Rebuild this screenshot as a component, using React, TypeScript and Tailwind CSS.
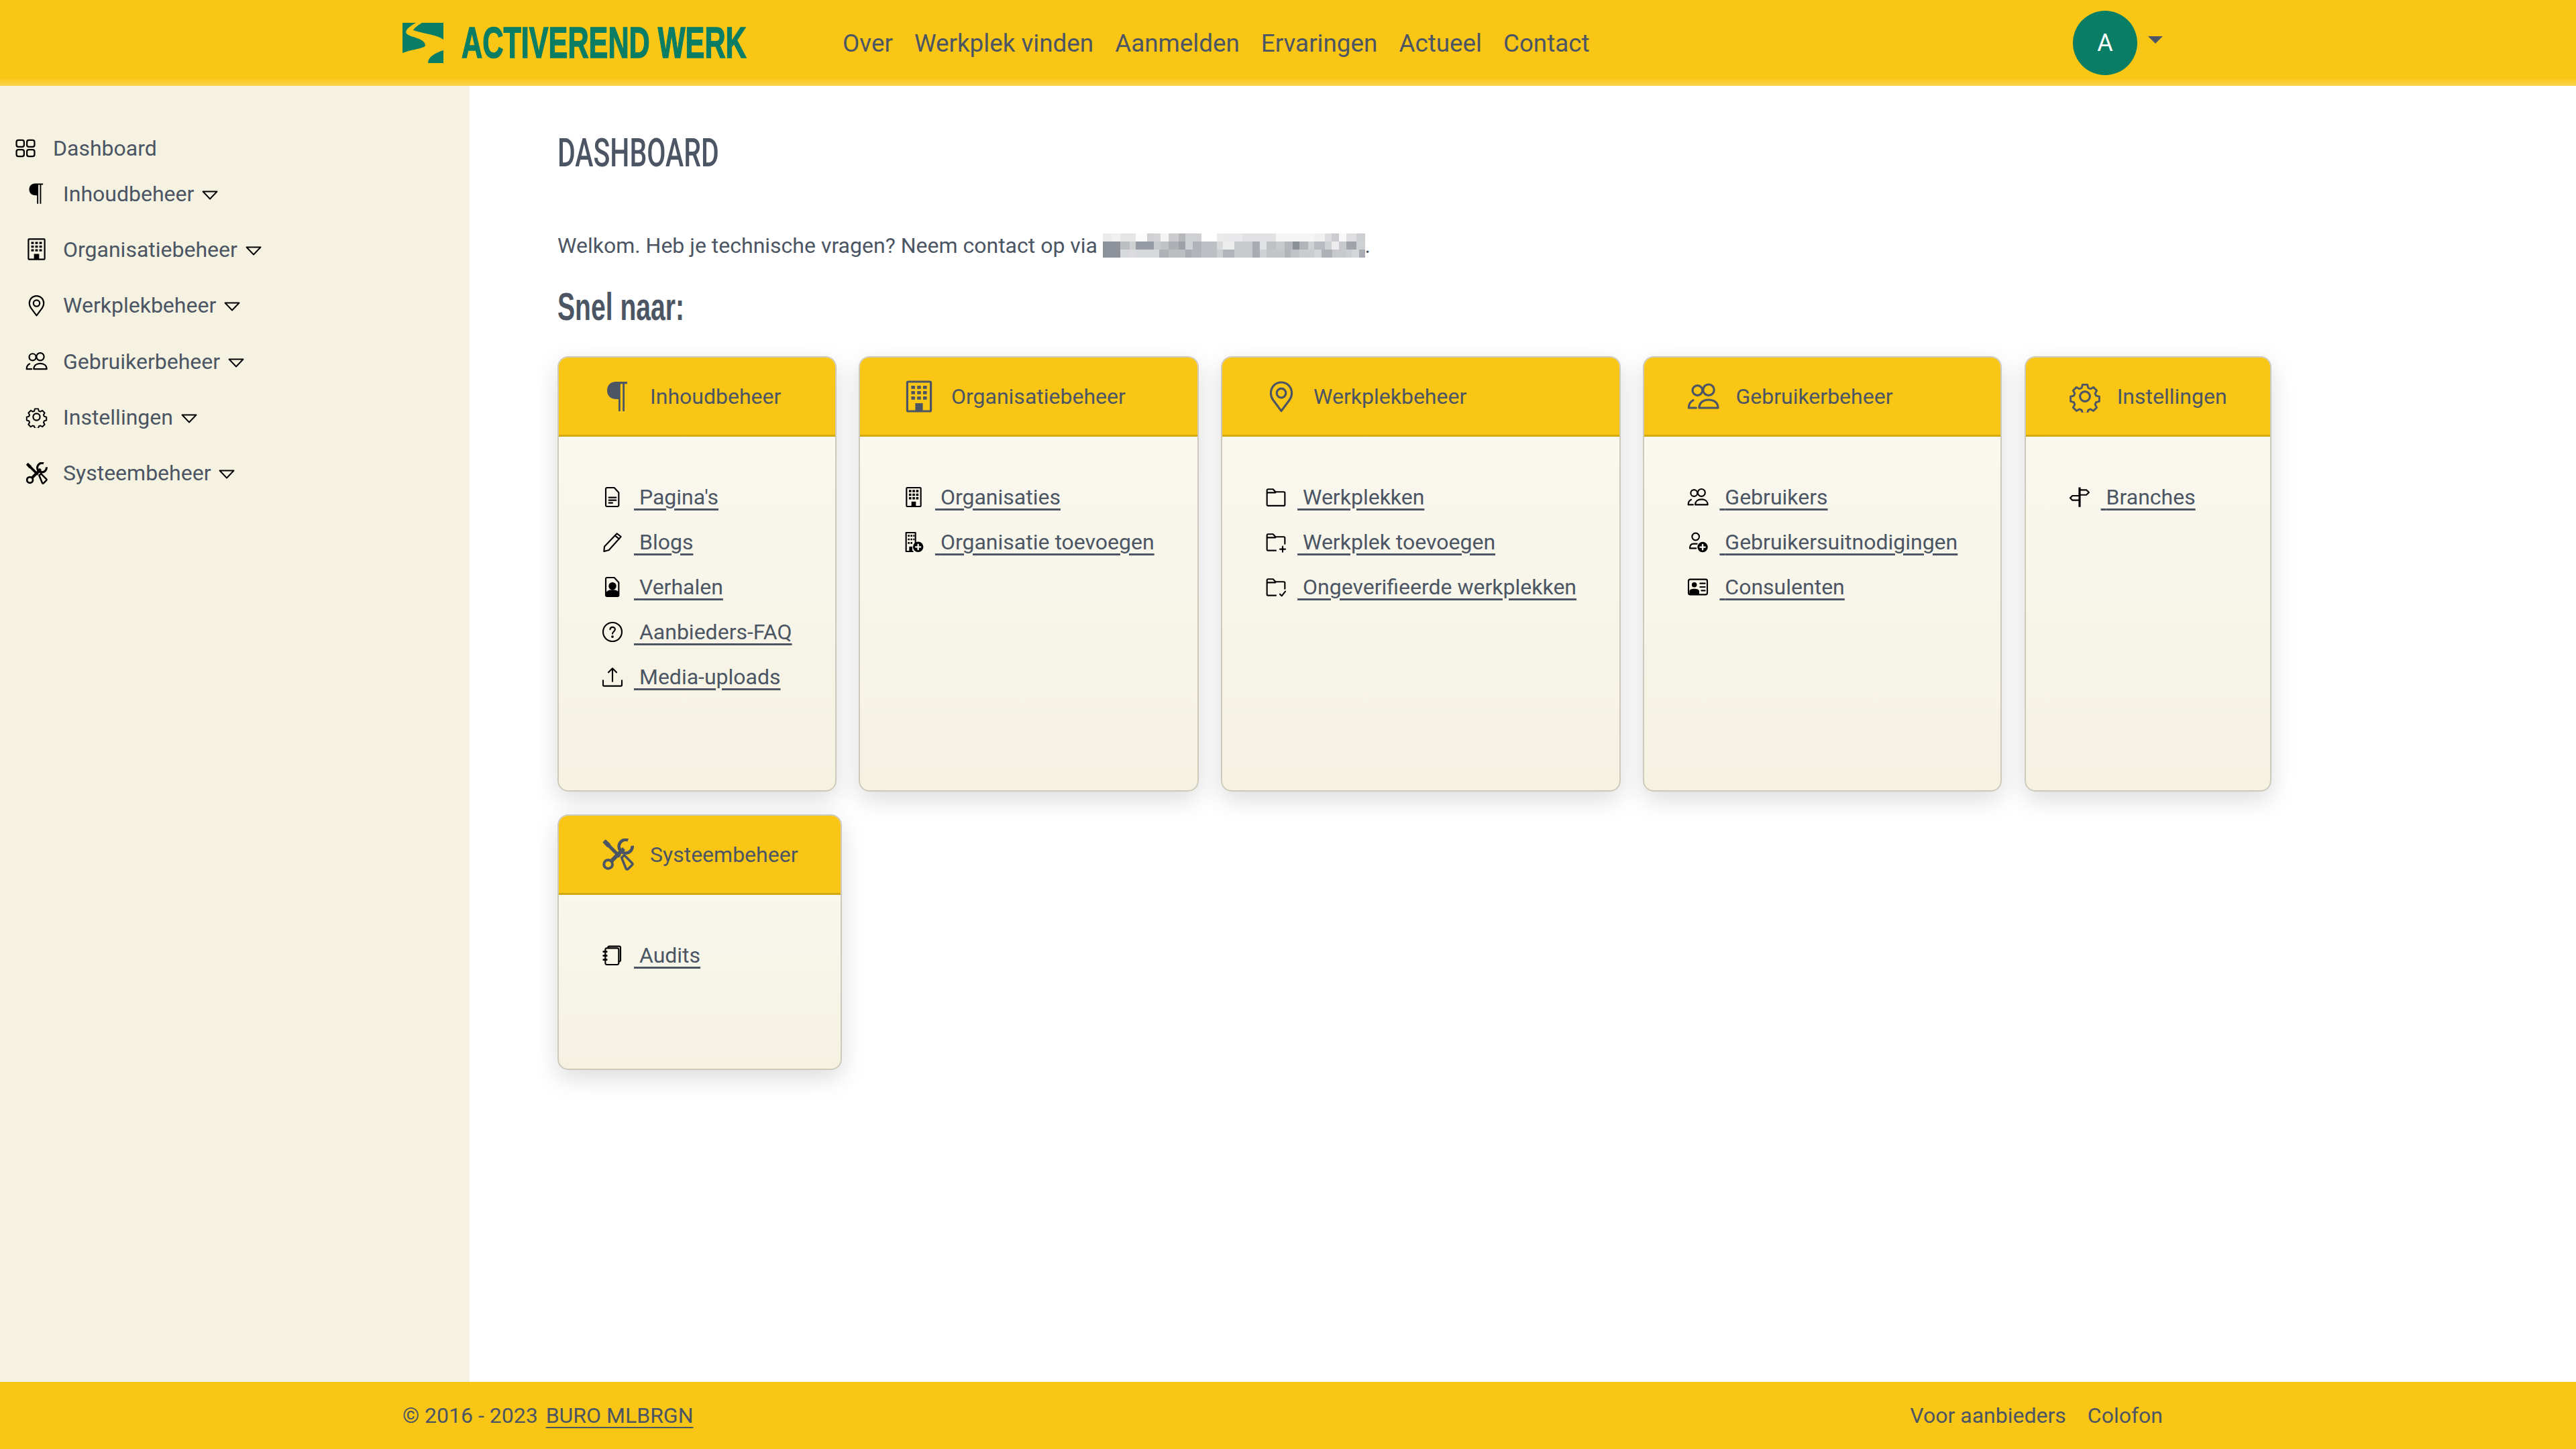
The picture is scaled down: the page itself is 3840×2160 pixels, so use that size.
import React from "react";

const S = (p: { children: React.ReactNode; className?: string; fill?: boolean }) => (
  <svg viewBox="0 0 24 24" fill={p.fill ? "currentColor" : "none"} stroke={p.fill ? "none" : "currentColor"} strokeWidth={1.6} strokeLinecap="round" strokeLinejoin="round" className={p.className}>
    {p.children}
  </svg>
);
type I = { className?: string };
const Grid = (p: I) => <S {...p}><rect x="2.500" y="3.500" width="8" height="7" rx="2" /><rect x="13.500" y="3.500" width="8" height="7" rx="2" /><rect x="2.500" y="13.500" width="8" height="7" rx="2" /><rect x="13.500" y="13.500" width="8" height="7" rx="2" /></S>;
const Para = (p: I) => <S {...p} fill><path d="M19 1v1.600h-2V23h-1.400V2.600h-1.700V23h-1.400V14h-1.500C6.400 14 4 11.300 4 7.500S6.600 1 10.500 1z" /></S>;
const Building = (p: I) => (
  <S {...p}>
    <rect x="3.200" y="1" width="17.600" height="22" rx=".8" />
    <path fill="currentColor" stroke="none" d="M6.200 4h2.800v2.400H6.200zM10.600 4h2.800v2.400h-2.800zM15 4h2.800v2.400H15zM6.200 8h2.800v2.400H6.200zM10.600 8h2.800v2.400h-2.800zM15 8h2.800v2.400H15zM6.200 12h2.800v2.400H6.200zM10.600 12h2.800v2.400h-2.800zM15 12h2.800v2.400H15zM9.200 17h5.600v5.500H9.200z" />
  </S>
);
const Pin = (p: I) => <S {...p}><path d="M12 22.800 5.900 14.600C4.900 13.200 4.200 11.600 4.200 9.500 4.200 5 7.600 1.500 12 1.500s7.800 3.500 7.800 8c0 2.100-.7 3.700-1.700 5.100z" /><circle cx="12" cy="9.500" r="3.400" /></S>;
const Users = (p: I) => (
  <S {...p}>
    <circle cx="7.700" cy="7.500" r="3.700" /><circle cx="16" cy="7.100" r="4.100" />
    <path d="M1.200 20.500h5.500M1.200 20.500c0-2.700 1-4.600 3.300-5.700M9 20.500h14c0-3.600-2.700-6-7-6s-7 2.400-7 6z" />
  </S>
);
const Gear = (p: I) => (
  <S {...p}>
    <path d="M10 2.200h4l.7 2.700 1.900.8 2.400-1.400 2.800 2.800-1.400 2.400.8 1.900 2.700.7v4l-2.700.7-.8 1.900 1.400 2.400-2.800 2.800-2.400-1.400-1.900.8-.7 2.700h-4l-.7-2.700-1.900-.8-2.400 1.400-2.800-2.800 1.400-2.400-.8-1.900-2.700-.7v-4l2.700-.7.8-1.900-1.400-2.400 2.800-2.800 2.400 1.400 1.900-.8z" transform="translate(1.200 1.200) scale(.9)" />
    <circle cx="12" cy="12" r="3.700" />
  </S>
);
const Tools = (p: I) => (
  <S {...p}>
    <path d="M3 3 13.500 13.500" strokeWidth="2.600" strokeLinecap="butt" />
    <path d="M1.300 2.800 2.800 1.300 6 4.300 4.300 6z" fill="currentColor" strokeWidth="1" />
    <path d="M14.800 14.300 16.800 12.400 22.600 18.200c.5.5.5 1 0 1.500L19.700 22.600c-.5.500-1 .5-1.500 0z" strokeWidth="1.800" />
    <circle cx="4.800" cy="19.200" r="3.200" strokeWidth="2" />
    <path d="M7.200 16.800 16.500 7.500" strokeWidth="3" strokeLinecap="butt" />
    <path d="M19.600 1.200A5 5 0 1 0 22.800 5.400" strokeWidth="2.300" strokeLinecap="butt" />
  </S>
);
const FileDoc = (p: I) => <S {...p}><path d="M6 1.500h8l5 5.500v14a1.500 1.500 0 0 1-1.500 1.500h-11.500A1.500 1.500 0 0 1 4.500 21V3A1.500 1.500 0 0 1 6 1.500z" /><path d="M8 12.500h8M8 15.500h8M8 18.500h4" /></S>;
const Pencil = (p: I) => <S {...p}><path d="M17 2.500 21.500 6 8 21l-5.500 1.500L3 17z" /><path d="m15 5 4.500 3.500" /></S>;
const Story = (p: I) => <S {...p}><path d="M6 1.500h8l5 5.500v14a1.500 1.500 0 0 1-1.500 1.500h-11.500A1.500 1.500 0 0 1 4.500 21V3A1.500 1.500 0 0 1 6 1.500z" /><circle cx="12" cy="11" r="3.500" fill="currentColor" /><path d="M5.500 22v-2.500c0-2 2-3.500 6.500-3.500s6.500 1.500 6.500 3.500V22z" fill="currentColor" /></S>;
const Help = (p: I) => <S {...p}><circle cx="12" cy="12" r="10.500" /><path d="M9.300 9.200c.2-1.600 1.300-2.500 2.800-2.500s2.800 1 2.800 2.500c0 2.300-2.900 2.500-2.900 4.800" /><circle cx="12" cy="17.300" r=".6" fill="currentColor" /></S>;
const Upload = (p: I) => <S {...p}><path d="M12 17V2.500M7.500 7 12 2.500 16.500 7M1.500 16v5c0 .8.500 1.200 1.200 1.200h18.600c.7 0 1.200-.4 1.200-1.200v-5" /></S>;
const OrgAdd = (p: I) => (
  <S {...p}>
    <path d="M14 16V1.500H3.500v21H11" />
    <path fill="currentColor" stroke="none" d="M5.500 4h2v2h-2zM8.500 4h2v2h-2zM11.500 4h1.500v2h-1.500zM5.500 8h2v2h-2zM8.500 8h2v2h-2zM11.500 8h1.500v2h-1.500zM5.500 12h2v2h-2zM8.500 12h2v2h-2zM7 17h3.500v5.500H7z" />
    <circle cx="17" cy="17.500" r="5.800" fill="currentColor" stroke="none" />
    <path d="M17 14.800v5.400M14.300 17.500h5.400" stroke="#f9f7ee" strokeWidth="1.800" />
  </S>
);
const Building2 = (p: I) => (
  <S {...p}>
    <rect x="4" y="1.500" width="16" height="21" rx=".8" />
    <path fill="currentColor" stroke="none" d="M6.700 4h2.700v2.600H6.700zM10.700 4h2.700v2.600h-2.700zM14.700 4h2.700v2.600h-2.700zM6.700 8h2.700v2.600H6.700zM10.700 8h2.700v2.600h-2.700zM14.700 8h2.700v2.600h-2.700zM6.700 12h2.700v2.600H6.700zM10.700 12h2.700v2.600h-2.700zM14.700 12h2.700v2.600h-2.700zM9.500 17h5v5.500h-5z" />
  </S>
);
const Folder = (p: I) => <S {...p}><path d="M2 20.500V4.500c0-.8.500-1.300 1.200-1.300h5.600l2.700 3H20.800c.7 0 1.200.5 1.200 1.200v13c0 .8-.5 1.300-1.200 1.300H3.200C2.500 21.700 2 21.300 2 20.500zM2 7h9.500" /></S>;
const FolderPlus = (p: I) => <S {...p}><path d="M12 21.500H3.200C2.500 21.500 2 21 2 20.300V4.500c0-.8.500-1.300 1.200-1.300h5.600l2.700 3H20.800c.7 0 1.200.5 1.200 1.200V14M2 7h9.500M19.500 17v6M16.500 20h6" /></S>;
const FolderCheck = (p: I) => <S {...p}><path d="M12 21.500H3.200C2.500 21.500 2 21 2 20.300V4.500c0-.8.500-1.300 1.200-1.300h5.600l2.700 3H20.800c.7 0 1.200.5 1.200 1.200V14M2 7h9.500M16.500 20l2 2 4-5" /></S>;
const UserAdd = (p: I) => (
  <S {...p}>
    <circle cx="9.500" cy="6" r="4" />
    <path d="M11 14H7c-2.600 0-4 1.800-4 5h7" />
    <circle cx="17.300" cy="17.700" r="5.800" fill="currentColor" stroke="none" />
    <path d="M17.300 15v5.400M14.600 17.700H20" stroke="#f9f7ee" strokeWidth="1.800" />
  </S>
);
const IdCard = (p: I) => (
  <S {...p}>
    <rect x="1.500" y="3.500" width="21" height="17" rx="2" />
    <circle cx="8" cy="9.500" r="2.800" fill="currentColor" stroke="none" />
    <path d="M2.500 20v-3c0-2 2-3 5.500-3s5.500 1 5.500 3v3z" fill="currentColor" stroke="none" />
    <path d="M14.500 8H20M14.500 12H20M16 16h4" />
  </S>
);
const Sign = (p: I) => <S {...p}><path d="M12 1.200V23" strokeWidth="2.400" strokeLinecap="butt" /><path d="M12 4h7.500l3 2.800-3 2.800H12M12 10.500H4L1.500 13 4 15.500h8" /></S>;
const Note = (p: I) => <S {...p}><path d="M7 3.800V3.500C7 2.600 7.600 2 8.500 2h11C20.400 2 21 2.600 21 3.500v14c0 .9-.6 1.500-1.500 1.500h-.3" /><rect x="4" y="4" width="15" height="18.500" rx="1.800" /><path d="M2 8h3.500M2 12.500h3.500M2 17h3.500" strokeWidth="2" /></S>;
const Tri = () => (
  <svg viewBox="0 0 24 14" className="block w-[24px] h-[14px] text-black shrink-0 mt-[4px]" fill="none" stroke="currentColor" strokeWidth="1.900" strokeLinejoin="round">
    <path d="M1.500 1.500h21L12 12.500z" />
  </svg>
);

const sidebar: [string, React.FC<I>][] = [
  ["Inhoudbeheer", Para],
  ["Organisatiebeheer", Building],
  ["Werkplekbeheer", Pin],
  ["Gebruikerbeheer", Users],
  ["Instellingen", Gear],
  ["Systeembeheer", Tools],
];

const cards: { title: string; Icon: React.FC<I>; links: [string, React.FC<I>][] }[] = [
  { title: "Inhoudbeheer", Icon: Para, links: [["Pagina's", FileDoc], ["Blogs", Pencil], ["Verhalen", Story], ["Aanbieders-FAQ", Help], ["Media-uploads", Upload]] },
  { title: "Organisatiebeheer", Icon: Building, links: [["Organisaties", Building2], ["Organisatie toevoegen", OrgAdd]] },
  { title: "Werkplekbeheer", Icon: Pin, links: [["Werkplekken", Folder], ["Werkplek toevoegen", FolderPlus], ["Ongeverifieerde werkplekken", FolderCheck]] },
  { title: "Gebruikerbeheer", Icon: Users, links: [["Gebruikers", Users], ["Gebruikersuitnodigingen", UserAdd], ["Consulenten", IdCard]] },
  { title: "Instellingen", Icon: Gear, links: [["Branches", Sign]] },
  { title: "Systeembeheer", Icon: Tools, links: [["Audits", Note]] },
];

/* blurred e-mail address: each row is [right edge in the crop, colour] */
const mosaic: [number, string][][] = [
  [[75,"#ebebeb"],[114,"#f0f0f0"],[183,"#e5e5e6"],[234,"#fbfbfb"],[264,"#d0d0d2"],[294,"#d4d4d6"],[330,"#f4f4f4"],[375,"#cccccf"],[405,"#b5b7bb"],[477,"#cfd0d3"],[546,"#ffffff"],[579,"#ebebec"],[660,"#e9e9eb"],[810,"#e2e2e4"],[980,"#f5f5f5"],[1030,"#f0f0f0"],[1060,"#dcdcde"],[1092,"#ccccd0"],[1125,"#f8f8f8"],[1170,"#dedee0"],[1208,"#cdced1"]],
  [[114,"#8e939b"],[155,"#bcbec2"],[183,"#cfd0d2"],[264,"#979ca4"],[297,"#c8c9cd"],[330,"#c0c2c6"],[375,"#adb0b5"],[405,"#9da1a8"],[437,"#d0d1d4"],[477,"#b0b3b9"],[546,"#bcbfc3"],[573,"#d8d9db"],[624,"#ededee"],[705,"#c8c9cc"],[738,"#a9acb3"],[768,"#e1e2e4"],[810,"#bfc1c5"],[850,"#c8c9cd"],[885,"#b3b6bb"],[915,"#8b9097"],[954,"#b1b4b9"],[980,"#d0d1d4"],[1030,"#b8bbbf"],[1060,"#d0d1d4"],[1092,"#ededee"],[1125,"#c8c9cd"],[1170,"#a0a3aa"],[1208,"#cfd0d3"]],
  [[114,"#8e939b"],[155,"#d8d9dc"],[183,"#dcdcdf"],[288,"#d8d9dc"],[330,"#aeb1b6"],[405,"#bcbec2"],[432,"#a9acb3"],[477,"#b1b4b9"],[546,"#bcbfc3"],[573,"#cdced1"],[624,"#b1b4b9"],[705,"#c8c9cc"],[738,"#a9acb3"],[768,"#cfd0d3"],[850,"#c3c5c9"],[877,"#b1b4b9"],[915,"#c0c2c6"],[980,"#cbccd0"],[1014,"#d4d5d8"],[1062,"#aeb1b6"],[1125,"#c8c9cc"],[1150,"#cdced1"],[1182,"#d4d5d8"],[1208,"#a9acb3"]],
];

export default function App() {
  return (
    <div className="flex flex-col h-[2160px] font-['Roboto',sans-serif] text-[#4b5563] text-[32px] bg-white">
      <header className="h-[128px] shrink-0 bg-[linear-gradient(#fac616_91%,#fbd550)] flex items-center pl-[600px] pr-[616px]">
        <svg viewBox="0 0 61 60" className="w-[61px] h-[60px] shrink-0 -mt-[1px] text-[#0a7d65]">
          <path fill="currentColor" d="M0 0h20C9 6 3 12 6 16c5 6 26 6 28 17 1 5-18 6-34 12z" />
          <path fill="currentColor" d="M29 0h32v25C50 17 33 17 16 11c2-4 8-8 13-11zM61 41v19H38c0-9 10-15 23-19z" />
        </svg>
        <div className="w-[424px] ml-[27px] shrink-0 font-['Liberation_Sans',sans-serif] font-bold text-[64px] leading-none text-[#0a7d65] [-webkit-text-stroke:1.5px_#0a7d65] whitespace-nowrap origin-left scale-x-[0.675]">ACTIVEREND WERK</div>
        <nav className="flex gap-[32px] ml-[144px] text-[36.8px] mt-[1px]">
          {["Over", "Werkplek vinden", "Aanmelden", "Ervaringen", "Actueel", "Contact"].map((n) => (
            <span key={n} className="whitespace-nowrap">{n}</span>
          ))}
        </nav>
        <div className="ml-auto flex items-center gap-[16px]">
          <div className="w-[96px] h-[96px] rounded-full bg-[#0a7d65] text-white flex items-center justify-center text-[36px]">A</div>
          <div className="w-0 h-0 border-x-[11px] border-x-transparent border-t-[11px] border-t-[#4b5563] -mt-[10px]" />
        </div>
      </header>
      <div className="flex flex-1 min-h-0">
        <aside className="w-[700px] shrink-0 bg-[#f5f2e2] pt-[75px] pl-[21px]">
          <div className="flex items-center h-[36px]">
            <Grid className="w-[34px] h-[34px] text-black" />
            <span className="ml-[24px]">Dashboard</span>
          </div>
          <div className="mt-[8px] pl-[17px] flex flex-col">
            {sidebar.map(([t, Ic]) => (
              <div key={t} className="flex items-center h-[83.3px]">
                <Ic className="w-[33px] h-[33px] text-black shrink-0" />
                <span className="ml-[23px]">{t}</span>
                <span className="ml-[12px]"><Tri /></span>
              </div>
            ))}
          </div>
        </aside>
        <main className="flex-1 px-[131px] pt-[70px]">
          <h1 className="h-[60px] w-[240px] font-medium text-[60px] leading-[60px] whitespace-nowrap origin-left scale-x-[0.683]">DASHBOARD</h1>
          <p className="mt-[88px] h-[40px] leading-[40px] flex items-center whitespace-nowrap">
            Welkom. Heb je technische vragen? Neem contact op via&nbsp;
            <span className="flex flex-col h-[36px] shrink-0">
              {mosaic.map((row, i) => (
                <span key={i} className="flex h-[12px]">
                  {row.map(([end, c], j) => (
                    <span key={j} className="h-[12px]" style={{ width: (end - (j ? row[j - 1][0] : 36)) / 3, backgroundColor: c }} />
                  ))}
                </span>
              ))}
            </span>
            .
          </p>
          <h2 className="mt-[41px] h-[60px] w-[188px] font-['Liberation_Sans',sans-serif] font-bold text-[58px] leading-[60px] whitespace-nowrap origin-left scale-x-[0.674]">Snel naar:</h2>
          <div className="mt-[44px] flex flex-wrap gap-x-[33.4px] gap-y-[34px]">
            {cards.map((c) => (
              <section key={c.title} className="rounded-[16px] border-2 border-[#cdcabc] overflow-hidden bg-[linear-gradient(#fbf9f2,#f5f2e2)] shadow-[0_12px_36px_rgba(0,0,0,0.14)]">
                <div className="h-[118px] bg-[#fac616] border-b-[3px] border-[#d4a90c] flex items-center px-[64px] whitespace-nowrap">
                  <c.Icon className="w-[48px] h-[48px] shrink-0" />
                  <span className="ml-[24px]">{c.title}</span>
                </div>
                <ul className="pt-[56px] pb-[136px] px-[64px]">
                  {c.links.map(([t, Ic]) => (
                    <li key={t} className="flex items-center h-[67px] whitespace-nowrap">
                      <Ic className="w-[32px] h-[32px] text-black shrink-0" />
                      <a className="ml-[16px] underline decoration-[2.5px] underline-offset-[6px]">&nbsp;{t}</a>
                    </li>
                  ))}
                </ul>
              </section>
            ))}
          </div>
        </main>
      </div>
      <footer className="h-[100px] shrink-0 bg-[#fac616] flex items-center pl-[600px] pr-[616px] whitespace-nowrap">
        <span>© 2016 - 2023</span>
        <a className="ml-[12px] underline decoration-[2px] underline-offset-[6px]">BURO MLBRGN</a>
        <a className="ml-auto">Voor aanbieders</a>
        <a className="ml-[32px]">Colofon</a>
      </footer>
    </div>
  );
}
